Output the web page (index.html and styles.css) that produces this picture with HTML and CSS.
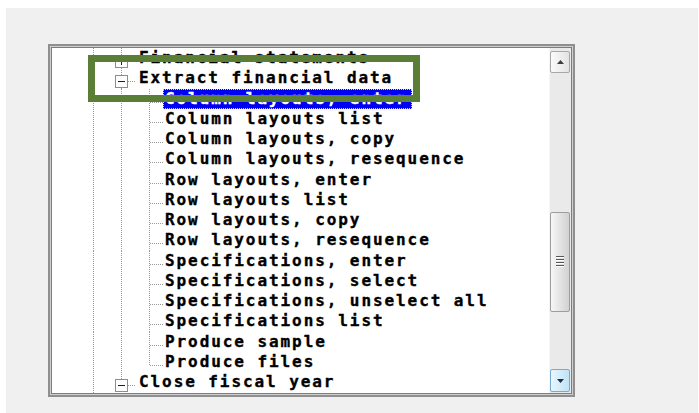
FILE: index.html
```html
<!DOCTYPE html>
<html lang="en">
<head>
<meta charset="utf-8">
<title>Financial reports menu</title>
<link rel="stylesheet" href="styles.css">
</head>
<body>
<div class="panel">
  <div class="treebox">
    <ul class="tree">
      <li class="row">
        <span class="guide line"></span>
        <span class="guide branch"><span class="exp plus"></span></span>
        <span class="label top">Financial statements</span>
      </li>
      <li class="row">
        <span class="guide line"></span>
        <span class="guide branch"><span class="exp"></span></span>
        <span class="label top">Extract financial data</span>
      </li>
      <li class="row">
        <span class="guide line"></span><span class="guide line"></span>
        <span class="guide branch"></span>
        <span class="label child sel">Column layouts, enter</span>
      </li>
      <li class="row">
        <span class="guide line"></span><span class="guide line"></span>
        <span class="guide branch"></span>
        <span class="label child">Column layouts list</span>
      </li>
      <li class="row">
        <span class="guide line"></span><span class="guide line"></span>
        <span class="guide branch"></span>
        <span class="label child">Column layouts, copy</span>
      </li>
      <li class="row">
        <span class="guide line"></span><span class="guide line"></span>
        <span class="guide branch"></span>
        <span class="label child">Column layouts, resequence</span>
      </li>
      <li class="row">
        <span class="guide line"></span><span class="guide line"></span>
        <span class="guide branch"></span>
        <span class="label child">Row layouts, enter</span>
      </li>
      <li class="row">
        <span class="guide line"></span><span class="guide line"></span>
        <span class="guide branch"></span>
        <span class="label child">Row layouts list</span>
      </li>
      <li class="row">
        <span class="guide line"></span><span class="guide line"></span>
        <span class="guide branch"></span>
        <span class="label child">Row layouts, copy</span>
      </li>
      <li class="row">
        <span class="guide line"></span><span class="guide line"></span>
        <span class="guide branch"></span>
        <span class="label child">Row layouts, resequence</span>
      </li>
      <li class="row">
        <span class="guide line"></span><span class="guide line"></span>
        <span class="guide branch"></span>
        <span class="label child">Specifications, enter</span>
      </li>
      <li class="row">
        <span class="guide line"></span><span class="guide line"></span>
        <span class="guide branch"></span>
        <span class="label child">Specifications, select</span>
      </li>
      <li class="row">
        <span class="guide line"></span><span class="guide line"></span>
        <span class="guide branch"></span>
        <span class="label child">Specifications, unselect all</span>
      </li>
      <li class="row">
        <span class="guide line"></span><span class="guide line"></span>
        <span class="guide branch"></span>
        <span class="label child">Specifications list</span>
      </li>
      <li class="row">
        <span class="guide line"></span><span class="guide line"></span>
        <span class="guide branch"></span>
        <span class="label child">Produce sample</span>
      </li>
      <li class="row">
        <span class="guide line"></span><span class="guide line"></span>
        <span class="guide branch last"></span>
        <span class="label child">Produce files</span>
      </li>
      <li class="row">
        <span class="guide line"></span>
        <span class="guide branch last"><span class="exp"></span></span>
        <span class="label top">Close fiscal year</span>
      </li>
    </ul>

    <div class="scrollbar">
      <span class="sb-btn up">
        <svg width="7" height="4" viewBox="0 0 7 4"><path d="M0 4 L3.5 0 L7 4 Z" fill="#3c3c3c"/></svg>
      </span>
      <span class="sb-thumb"><span class="grip"></span></span>
      <span class="sb-btn down">
        <svg width="7" height="4" viewBox="0 0 7 4"><path d="M0 0 L7 0 L3.5 4 Z" fill="#1c2f4a"/></svg>
      </span>
    </div>

    <div class="callout"></div>
  </div>
</div>
</body>
</html>
```

FILE: styles.css
```css
html, body {
  margin: 0;
  background: #ffffff;
}

.panel {
  margin: 8px 1px 0 6px;
  height: 405px;
  box-sizing: border-box;
  padding: 36px 0 0 42px;
  background: #f0f0f0;
}

/* tree view frame */
.treebox {
  position: relative;
  display: flex;
  width: 527px;
  height: 353px;
  box-sizing: border-box;
  border: 2px solid #8f8f8f;
  box-shadow: inset 0 0 0 1px #cfcfcf, inset 0 0 0 2px #7d7d7d;
  padding: 2px;
  background: #ffffff;
}

.tree {
  flex: 1;
  list-style: none;
  margin: 0;
  padding: 0 0 0 27px;
  overflow: hidden;
  font-family: "DejaVu Sans Mono", "Liberation Mono", monospace;
  font-weight: bold;
  font-size: 16px;
  letter-spacing: 1.92px;
  color: #000000;
  -webkit-text-stroke: 0.35px currentColor;
}

.row {
  display: flex;
  align-items: stretch;
  height: 20.28px;
  line-height: 20.28px;
  white-space: nowrap;
}

/* guide cells with dotted connector lines */
.guide {
  position: relative;
  flex: none;
  width: 28px;
}

.guide.line {
  background: repeating-linear-gradient(to bottom, #9a9a9a 0 1px, transparent 1px 2px) 14px 0 / 1px 100% no-repeat;
}

.guide.branch {
  background:
    repeating-linear-gradient(to right, #9a9a9a 0 1px, transparent 1px 2px) 15px 13px / 13px 1px no-repeat,
    repeating-linear-gradient(to bottom, #9a9a9a 0 1px, transparent 1px 2px) 14px 0 / 1px 100% no-repeat;
}

.guide.branch.last {
  background:
    repeating-linear-gradient(to right, #9a9a9a 0 1px, transparent 1px 2px) 15px 13px / 13px 1px no-repeat,
    repeating-linear-gradient(to bottom, #9a9a9a 0 1px, transparent 1px 2px) 14px 0 / 1px 14px no-repeat;
}

/* expand / collapse box */
.exp {
  position: absolute;
  left: 8px;
  top: 7px;
  width: 13px;
  height: 13px;
  box-sizing: border-box;
  border: 1px solid #8d8d8d;
  background: #ffffff;
}

.exp::before {
  content: "";
  position: absolute;
  left: 2px;
  top: 5px;
  width: 7px;
  height: 1px;
  background: #1a1a1a;
}

.exp.plus::after {
  content: "";
  position: absolute;
  left: 5px;
  top: 2px;
  width: 1px;
  height: 7px;
  background: #1a1a1a;
}

.label.top {
  margin-left: 4px;
}

.label.child {
  padding: 0 4px 0 2px;
}

.label.sel {
  background: #0000f2;
  color: #ffffff;
  outline: 1px dotted #f4e400;
  outline-offset: -1px;
}

/* vertical scrollbar */
.scrollbar {
  flex: none;
  width: 22px;
  display: flex;
  flex-direction: column;
  align-items: center;
  box-sizing: border-box;
  padding: 3px 1px 1px 1px;
  background: linear-gradient(to right, #f6f6f6 0 1px, #eaeaea 1px);
}

.sb-btn {
  display: flex;
  align-items: center;
  justify-content: center;
  width: 20px;
  box-sizing: border-box;
  border-radius: 2px;
}

.sb-btn.up {
  height: 22px;
  border: 1px solid #a8a8a8;
  background: linear-gradient(to right, #fbfbfb, #e3e3e3);
}

.sb-btn.down {
  margin-top: auto;
  height: 23px;
  border: 1px solid #76acd4;
  background: linear-gradient(to right, #e8f6fd, #c0e3f7);
}

.sb-thumb {
  display: flex;
  align-items: center;
  justify-content: center;
  margin-top: 139px;
  width: 20px;
  height: 100px;
  box-sizing: border-box;
  border: 1px solid #9d9d9d;
  border-radius: 2px;
  background: linear-gradient(to right, #f7f7f7, #dcdcdc 70%, #d2d2d2);
}

.grip {
  width: 8px;
  height: 12px;
  background: repeating-linear-gradient(to bottom, #565656 0 1px, #ffffff 1px 2px, transparent 2px 3px);
}

/* highlight frame drawn over the tree */
.callout {
  position: absolute;
  left: 38px;
  top: 9px;
  width: 332px;
  height: 47px;
  box-sizing: border-box;
  border: 7px solid #5b7e37;
}
```
